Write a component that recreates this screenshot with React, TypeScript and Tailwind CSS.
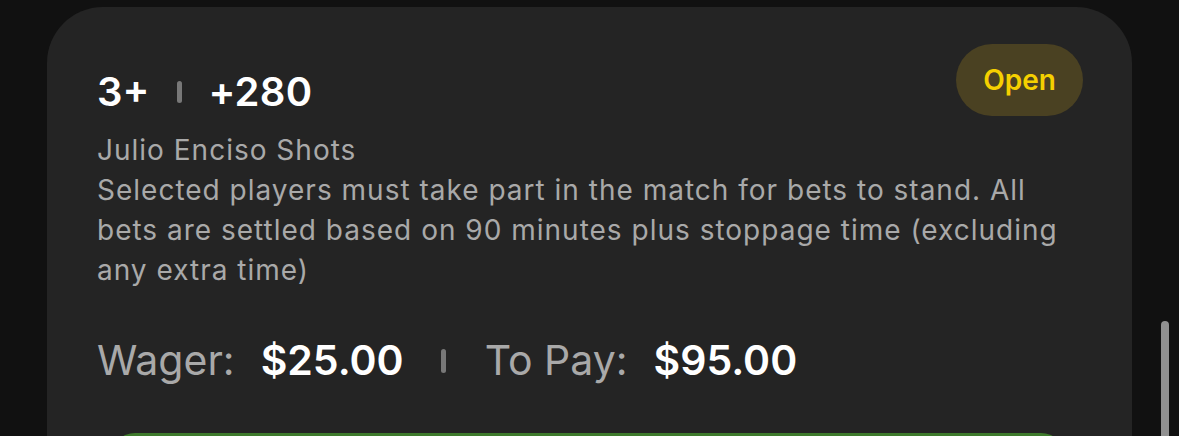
import React from "react";

export default function App() {
  return (
    <div className="relative h-[436px] w-[1179px] overflow-hidden bg-[#111111] pl-[47px] pt-[7px]" style={{ fontFamily: "Inter, 'Noto Sans', sans-serif" }}>
      <div className="w-[1085px] rounded-t-[56px] bg-[#242424] pl-[50px] pr-[49px] pt-[37px]">
        <div className="flex items-start justify-between">
          <div className="mt-[28px] flex items-center text-[40px] font-semibold leading-none text-white">
            <span>3+</span>
            <span className="ml-[28px] mr-[26px] h-[22px] w-[5px] rounded-full bg-[#787878]" />
            <span className="tracking-[0.3px]">+280</span>
          </div>
          <div className="flex h-[72px] w-[127px] items-center justify-center rounded-full bg-[#4a4122] text-[28px] font-semibold text-[#f5d000]">
            Open
          </div>
        </div>
        <div className="mt-[14px] text-[28px] leading-[40px] tracking-[1px] text-[#a9a9a9]">
          <div>Julio Enciso Shots</div>
          <div className="w-[985px]">
            Selected players must take part in the match for bets to stand. All bets are settled based on 90 minutes plus stoppage time (excluding any extra time)
          </div>
        </div>
        <div className="mt-[50px] flex items-center text-[41px] leading-none">
          <span className="text-[#a9a9a9]">Wager:</span>
          <span className="ml-[26px] font-semibold text-white">$25.00</span>
          <span className="ml-[37px] mr-[39px] h-[24px] w-[5px] rounded-full bg-[#787878]" />
          <span className="text-[#a9a9a9]">To Pay:</span>
          <span className="ml-[26px] font-semibold text-white">$95.00</span>
        </div>
        <div className="ml-[14px] mt-[52px] h-[40px] w-[954px] rounded-t-[24px] bg-[#3e7a2c]" />
      </div>
      <div className="absolute left-[1161px] top-[321px] h-[140px] w-[8px] rounded-full bg-[#909090]" />
    </div>
  );
}
